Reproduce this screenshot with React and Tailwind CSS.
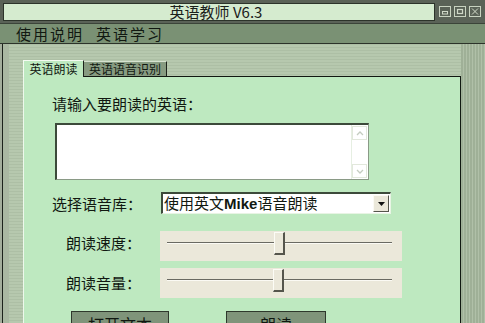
import React from 'react';

const cjk = '"Noto Sans CJK SC", "Liberation Sans", sans-serif';

const TitleButton = ({ kind }) => (
  <div className="w-[12px] h-[11px] border border-[#c8d2c0] flex items-center justify-center">
    <svg width="8" height="7" viewBox="0 0 8 7">
      {kind === 'min' && <rect x="1.5" y="3.5" width="5" height="2.5" fill="none" stroke="#d0d8c8" strokeWidth="1" />}
      {kind === 'max' && <rect x="1.5" y="1.5" width="5" height="4" fill="none" stroke="#d0d8c8" strokeWidth="1.2" />}
      {kind === 'close' && <path d="M1 0.5 L7 6.5 M7 0.5 L1 6.5" stroke="#d0d8c8" strokeWidth="1" />}
    </svg>
  </div>
);

const Slider = ({ pos }) => (
  <div className="relative w-[242px] h-[30px] bg-[#ebe8da]">
    {/* track */}
    <div className="absolute left-[7px] right-[10px] top-[11px] h-[2px] border-t border-[#6a6a62] border-b border-b-[#fbfaf4]" />
    {/* thumb */}
    <div
      className="absolute top-[1px] w-[11px] h-[23px] bg-[#ebe8da] border-l border-t border-[#fcfcf6] border-r-2 border-b-2 border-r-[#55554c] border-b-[#55554c]"
      style={{ left: pos }}
    />
  </div>
);

export default function App() {
  return (
    <div
      className="w-[485px] h-[323px] overflow-hidden flex flex-col bg-[#b4c5ac]"
      style={{ fontFamily: cjk }}
    >
      {/* Title bar */}
      <div className="h-[23px] shrink-0 bg-[#5a6257] flex items-center pl-[3px] pr-[4px] gap-[3px]">
        <div className="flex-1 h-[18px] bg-[#d5ebcf] border border-[#2c332a] flex items-center justify-center text-[15px] leading-none text-[#1a201a] pr-[6px]">
          英语教师 V6.3
        </div>
        <div className="flex gap-[3px] pl-[1px]">
          <TitleButton kind="min" />
          <TitleButton kind="max" />
          <TitleButton kind="close" />
        </div>
      </div>

      {/* Menu bar */}
      <div className="h-[21px] shrink-0 bg-[#7a9174] border-t border-[#3b4439] border-b border-b-[#2c332a] flex items-center pl-[16px] text-[15px] leading-none tracking-[2px] text-[#111811]">
        <span>使用说明</span>
        <span className="ml-[12px]">英语学习</span>
      </div>

      {/* Body */}
      <div className="flex flex-1 min-h-0">
        {/* left frame */}
        <div className="w-[9px] shrink-0 flex">
          <div className="w-[2px] bg-[#a4ae9c]" />
          <div className="w-[1px] bg-[#1c221b]" />
          <div className="flex-1 bg-[#aab8a2]" />
        </div>

        {/* main area */}
        <div className="flex-1 pt-[16px] pl-[14px] bg-[repeating-linear-gradient(0deg,#b6c8ae_0px,#b6c8ae_2px,#adbfa5_2px,#adbfa5_3px)]">
          {/* tabs */}
          <div className="flex items-end h-[16px] text-[12px] leading-none text-[#111811]">
            <div className="relative z-10 h-[17px] w-[61px] bg-[#bee9c0] border-t border-l border-[#f4fbf2] border-r border-r-[#1c221b] flex items-center justify-center -mb-[1px]">
              英语朗读
            </div>
            <div className="h-[15px] w-[83px] bg-[#879b81] border-t border-[#d6e2d0] border-r border-r-[#1c221b] flex items-center justify-center">
              英语语音识别
            </div>
          </div>

          {/* panel */}
          <div className="h-[260px] bg-[#bee9c0] border-t border-[#111811] border-l border-l-[#eef8ec] border-r border-r-[#111811] text-[15px] leading-[16px] text-[#111811]">
            <div className="pl-[28px] pt-[19px]">请输入要朗读的英语：</div>

            {/* text area */}
            <div className="ml-[31px] mt-[11px] w-[314px] h-[57px] bg-white border-t-2 border-l-2 border-[#3c4a3a] border-r border-b border-r-[#8a9a86] border-b-[#8a9a86] flex justify-end">
              <div className="w-[16px] h-full flex flex-col justify-between py-[1px] mr-[1px] border-l border-[#e6efe2]">
                <div className="h-[14px] border border-[#e2e8dc] flex items-center justify-center">
                  <svg width="8" height="5" viewBox="0 0 8 5"><path d="M1 4 L4 1 L7 4" fill="none" stroke="#c4ccc0" strokeWidth="1.3" /></svg>
                </div>
                <div className="h-[14px] border border-[#e2e8dc] flex items-center justify-center">
                  <svg width="8" height="5" viewBox="0 0 8 5"><path d="M1 1 L4 4 L7 1" fill="none" stroke="#c4ccc0" strokeWidth="1.3" /></svg>
                </div>
              </div>
            </div>

            {/* voice library */}
            <div className="flex items-center pl-[28px] mt-[12px]">
              <div className="w-[109px] pt-[2px]">选择语音库：</div>
              <div className="w-[230px] h-[22px] bg-white border-t-2 border-l-2 border-[#3c4a3a] border-r border-b border-r-[#e8f4e4] border-b-[#e8f4e4] flex items-center pl-[1px] pr-[1px]">
                <span className="flex-1 whitespace-nowrap">
                  使用英文<b className="font-bold" style={{ fontFamily: '"Liberation Sans", sans-serif' }}>Mike</b>语音朗读
                </span>
                <div className="w-[16px] h-[17px] bg-[#ebe8da] border-l border-t border-[#fbfaf4] border-r border-b border-r-[#55554c] border-b-[#55554c] flex items-center justify-center">
                  <svg width="7" height="4" viewBox="0 0 7 4"><path d="M0 0 H7 L3.5 4 Z" fill="#111" /></svg>
                </div>
              </div>
            </div>

            {/* speed */}
            <div className="flex items-center pl-[42px] mt-[17px]">
              <div className="w-[94px] pb-[6px]">朗读速度：</div>
              <Slider pos={114} />
            </div>

            {/* volume */}
            <div className="flex items-center pl-[42px] mt-[7px]">
              <div className="w-[94px]">朗读音量：</div>
              <Slider pos={113} />
            </div>

            {/* buttons */}
            <div className="flex pl-[47px] mt-[13px] gap-[57px] text-[16px]">
              <div className="w-[98px] h-[26px] bg-[#7f947a] border border-[#2e382c] flex justify-center pt-[4px]">打开文本</div>
              <div className="w-[100px] h-[26px] bg-[#7f947a] border border-[#2e382c] flex justify-center pt-[4px]">朗读</div>
            </div>
          </div>
        </div>

        {/* right frame */}
        <div className="w-[24px] shrink-0 bg-[repeating-linear-gradient(90deg,#9fb097_0px,#9fb097_2px,#b0c0a8_2px,#b0c0a8_3px)]" />
      </div>
    </div>
  );
}
